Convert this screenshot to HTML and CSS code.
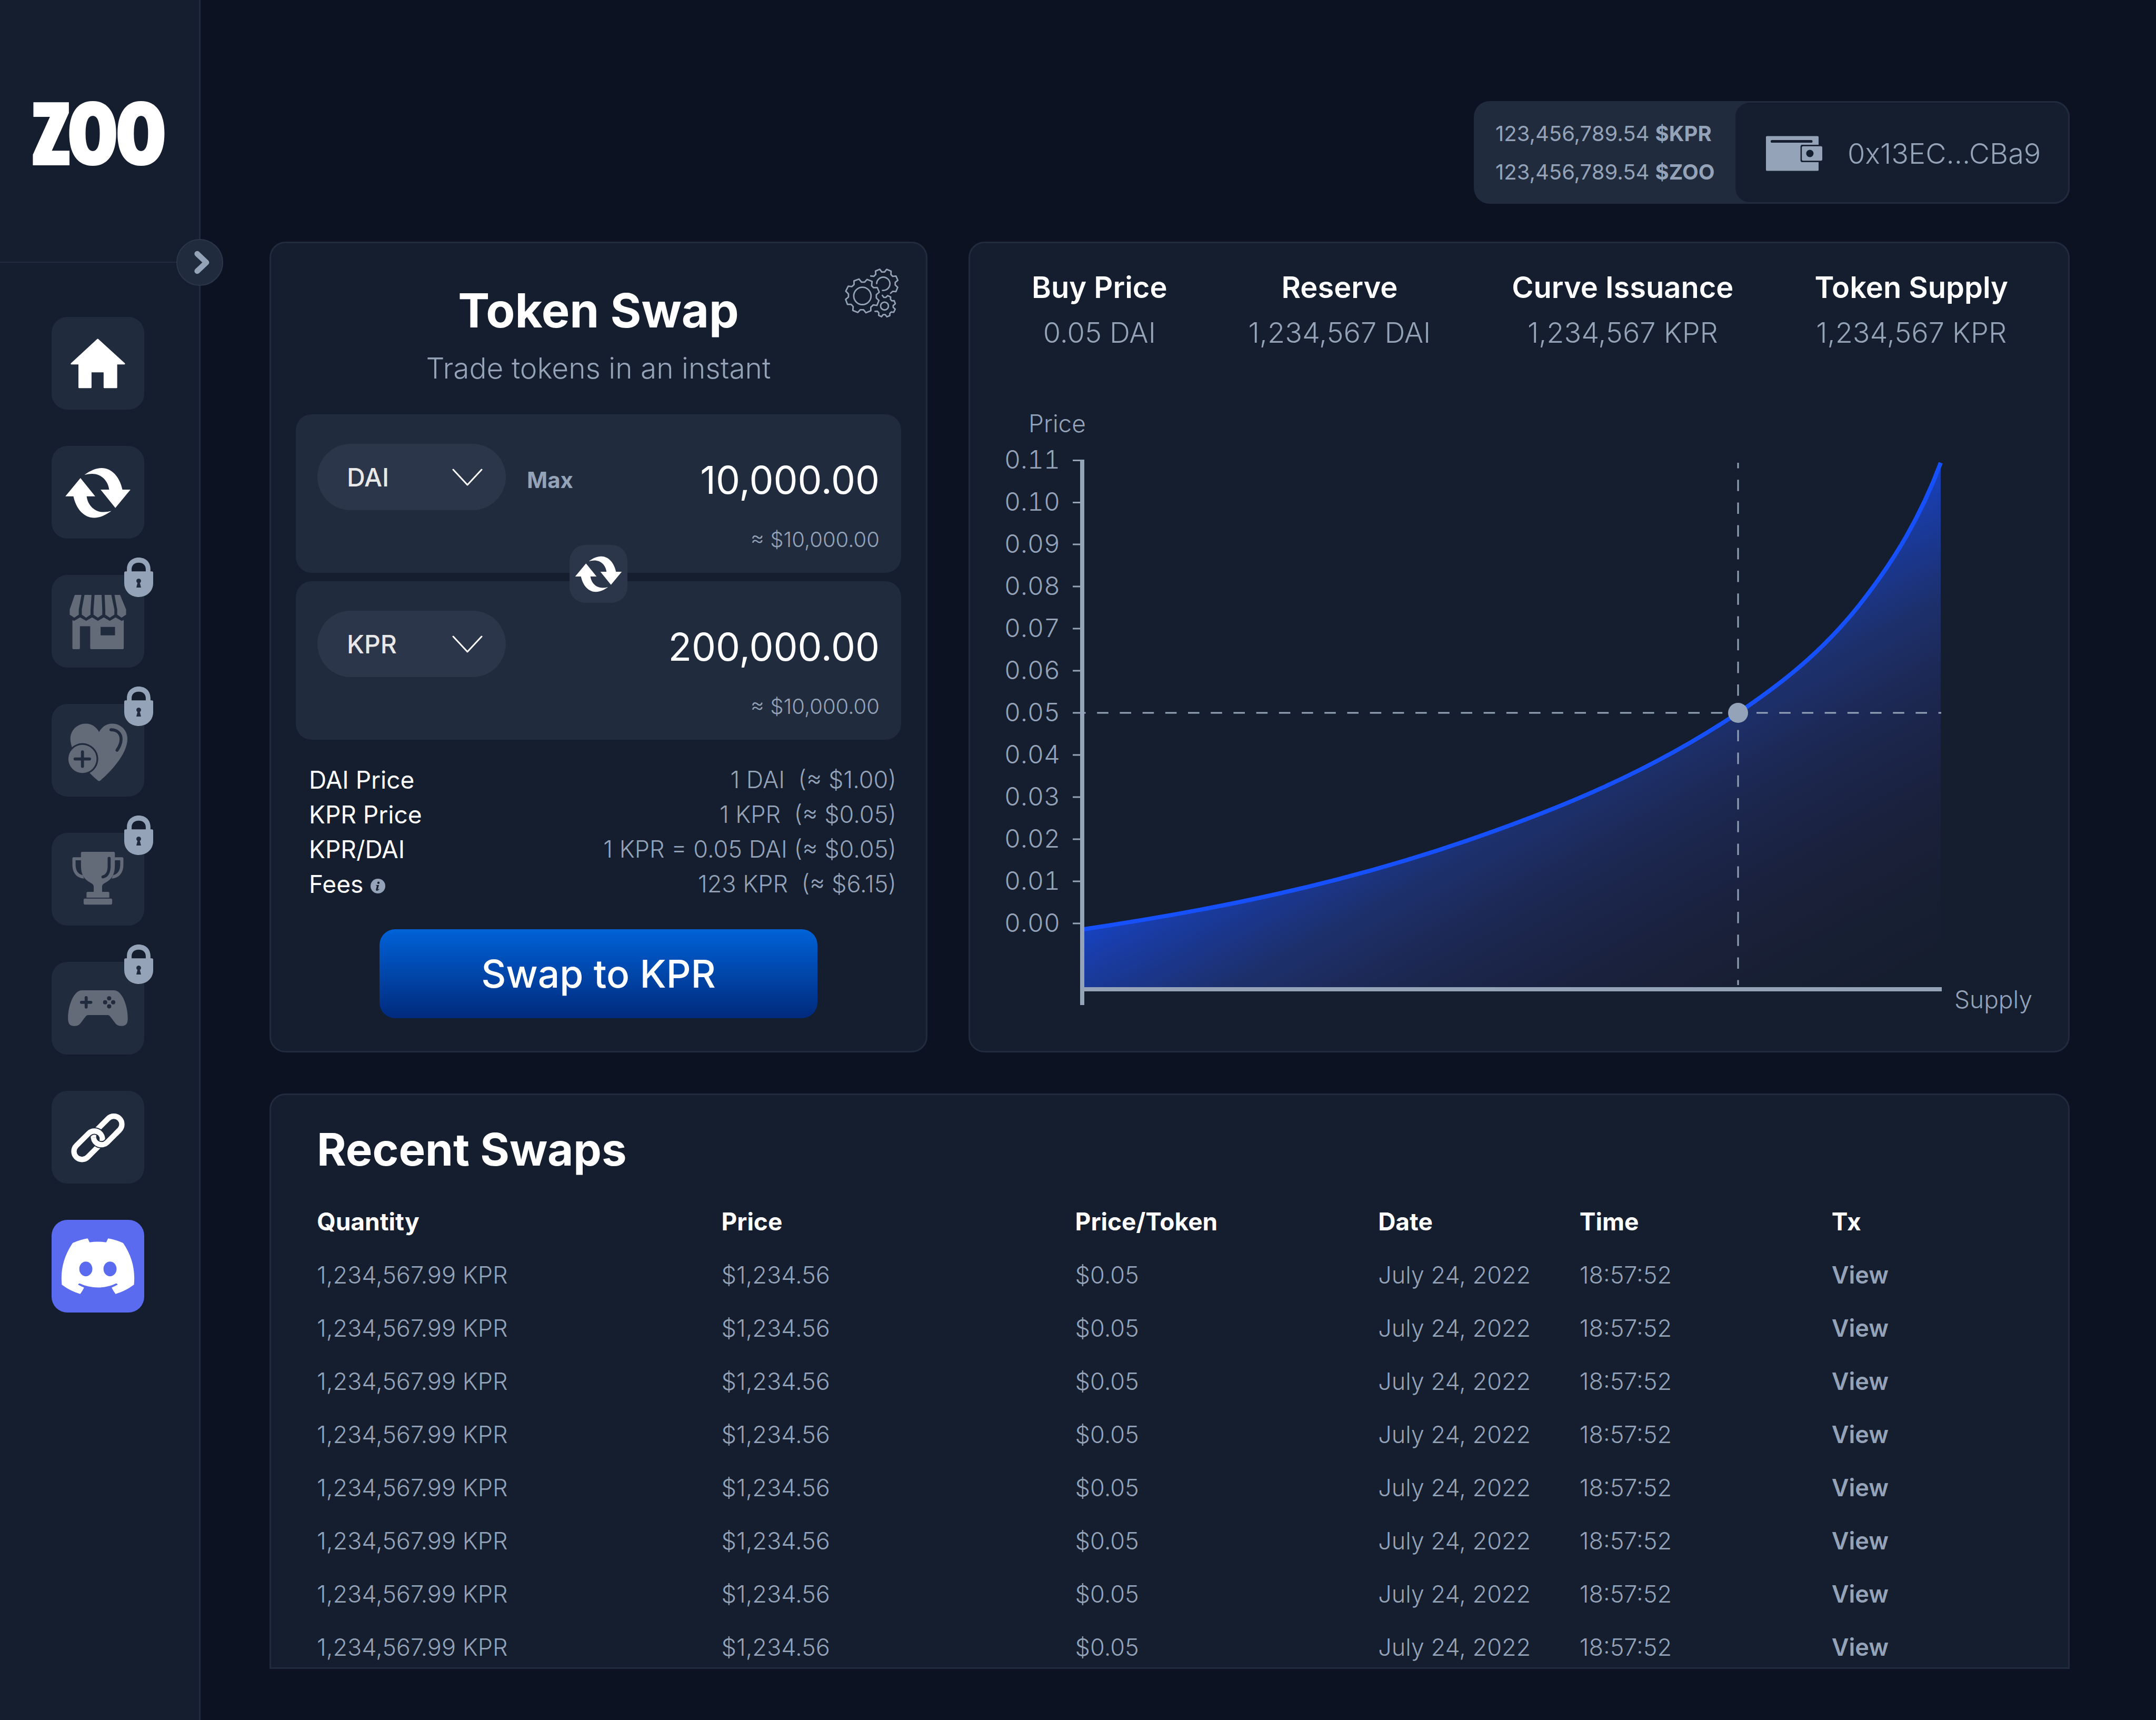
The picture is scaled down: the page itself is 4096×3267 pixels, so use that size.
FILE: index.html
```html
<!DOCTYPE html>
<html lang="en">
<head>
<meta charset="utf-8">
<title>Zoo – Token Swap</title>
<link rel="stylesheet" href="styles.css">
</head>
<body>
<svg class="defs" aria-hidden="true">
  <defs>
    <symbol id="icon-swap" viewBox="40 60 196 160">
      <path id="swap-half" d="M97.800 86.300C115 74 132 66 149 66C180 66 203 93 211 130H235L190 184.500L146 130H171.500C168 103 148 83 121 83Q109 83 97.800 86.300Z"/>
      <use href="#swap-half" transform="rotate(180 138 140)"/>
    </symbol>
    <symbol id="icon-lock" viewBox="0 0 86 117">
      <path fill-rule="evenodd" d="M8 41V34C8 14 22 0 43 0C64 0 78 14 78 34V41H82Q86 41 86 45V76C86 100 67 117 43 117C19 117 0 100 0 76V45Q0 41 4 41ZM22 41H64V35C64 22 55 15 43 15C31 15 22 22 22 35Z"/>
      <path class="cut" d="M39.500 75.500A7 7 0 1 1 46.500 75.500L50 89H36Z"/>
    </symbol>
  </defs>
</svg>

<div class="app">
  <aside class="sidebar">
    <a class="logo" href="#">ZOO</a>
    <button class="collapse" type="button" aria-label="Expand menu">
      <svg viewBox="0 0 88 88"><path d="M39 27L57 44L39 61"/></svg>
    </button>
    <nav class="nav">
      <a class="tile" href="#" aria-label="Home">
        <svg viewBox="0 0 276 276"><path class="round" d="M137.500 67L217 139.500H193.500V210H157V163H117V210H82V139.500H59Z"/></svg>
      </a>
      <a class="tile" href="#" aria-label="Swap">
        <svg viewBox="0 0 276 276"><use href="#icon-swap" x="40" y="60" width="196" height="160"/></svg>
      </a>
      <a class="tile locked" href="#" aria-label="Store">
        <svg viewBox="0 0 276 276">
          <path d="M69 59.500H89L81 103V118.500L67.500 127.500L54 118.500V103ZM98 59.500H119L116 103V118.500L103 127.500L90 118.500V103ZM128 59.500H149L151 103V118.500L138 127.500L125 118.500V103ZM158 59.500H178L187 103V118.500L173.500 127.500L160 118.500V103ZM187.500 59.500H204L222 103V118.500L208.500 127.500L195.500 118.500V103Z"/>
          <path fill-rule="evenodd" d="M62 134.500L67 137L85 126.500L103 137L120.500 126.500L138 137L155.500 126.500L173.500 137L190.500 126.500L208.500 137L215 134.500V217Q215 221 211 221H119Q115 221 115 217V153H84.500V217Q84.500 221 80.500 221H66Q62 221 62 217ZM146 155V180H189V155Z"/>
        </svg>
        <svg class="lock" viewBox="0 0 86 117"><use href="#icon-lock"/></svg>
      </a>
      <a class="tile locked" href="#" aria-label="Health">
        <svg viewBox="0 0 276 276">
          <path d="M141.500 83.500C132 68 119 59 102 59C76 59 56 79 56 104C56 150 110 205 138 228.500Q141.500 231 145 228.500C173 205 226 150 226 104C226 79 206 59 181 59C164 59 151 68 141.500 83.500Z"/>
          <circle class="cut" cx="92" cy="164" r="47"/><circle cx="92" cy="164" r="42"/>
          <path class="groove" d="M92 143V186M70 164H113M177 77C196 77 207 88 207 105C207 117 202 128 195 138"/>
        </svg>
        <svg class="lock" viewBox="0 0 86 117"><use href="#icon-lock"/></svg>
      </a>
      <a class="tile locked" href="#" aria-label="Rewards">
        <svg viewBox="0 0 276 276">
          <path d="M91 56.500H185Q188.500 56.500 188.500 60V95C188.500 118 184 133 166 145C156 151 150.500 153 150.500 160V175.500H125.500V160C125.500 153 120 151 110 145C92 133 87.500 118 87.500 95V60Q87.500 56.500 91 56.500Z"/>
          <path fill-rule="evenodd" d="M88 72.500H66Q62 72.500 62 77V95C62 118 74 135 97 136L93 126C78 122 71.500 112 71.500 95V81.500H88ZM188 72.500H210Q214 72.500 214 77V95C214 118 202 135 179 136L183 126C198 122 204.500 112 204.500 95V81.500H188Z"/>
          <path d="M108 175.500H168Q172 175.500 172 179V193H104V179Q104 175.500 108 175.500Z"/>
          <rect x="95.500" y="195.500" width="85" height="18" rx="4"/>
          <path class="groove" d="M171.500 76V100Q171 127 153 131"/>
        </svg>
        <svg class="lock" viewBox="0 0 86 117"><use href="#icon-lock"/></svg>
      </a>
      <a class="tile locked" href="#" aria-label="Games">
        <svg viewBox="0 0 276 276">
          <path d="M90 84.500H186C208 84.500 227 126 227 168C227 184 222 191 207 191Q196 191 190 183L174 162Q171 158.500 167 158.500H109Q105 158.500 102 162L86 183Q80 191 69 191C54 191 49 184 49 168C49 126 68 84.500 90 84.500Z"/>
          <path class="groove" d="M103 106.500V134.500M89 120.500H117"/>
          <g class="cut"><circle cx="171.500" cy="108.500" r="6.300"/><circle cx="171.500" cy="132.500" r="6.300"/><circle cx="159.500" cy="120.500" r="6.300"/><circle cx="183.500" cy="120.500" r="6.300"/></g>
        </svg>
        <svg class="lock" viewBox="0 0 86 117"><use href="#icon-lock"/></svg>
      </a>
      <a class="tile" href="#" aria-label="Links">
        <svg viewBox="0 0 276 276">
          <g class="chain">
            <rect x="-24" y="-50" width="48" height="100" rx="24" transform="translate(167 118) rotate(45)"/>
            <g transform="translate(109 162) rotate(45)">
              <path class="halo" d="M15 -44.700A24 24 0 0 0 -24 -26V10"/>
              <rect x="-24" y="-50" width="48" height="100" rx="24"/>
            </g>
            <g transform="translate(167 118) rotate(45)">
              <path class="halo" d="M-15 44.700A24 24 0 0 0 24 26V-10"/>
              <path d="M-15 44.700A24 24 0 0 0 24 26V-26"/>
            </g>
          </g>
        </svg>
      </a>
      <a class="tile discord" href="#" aria-label="Discord">
        <svg viewBox="0 0 276 276"><path transform="translate(29.500 29.500) scale(9.040)" d="M20.317 4.3698a19.7913 19.7913 0 00-4.8851-1.5152.0741.0741 0 00-.0785.0371c-.211.3753-.4447.8648-.6083 1.2495-1.8447-.2762-3.68-.2762-5.4868 0-.1636-.3933-.4058-.8742-.6177-1.2495a.077.077 0 00-.0785-.037 19.7363 19.7363 0 00-4.8852 1.515.0699.0699 0 00-.0321.0277C.5334 9.0458-.319 13.5799.0992 18.0578a.0824.0824 0 00.0312.0561c2.0528 1.5076 4.0413 2.4228 5.9929 3.0294a.0777.0777 0 00.0842-.0276c.4616-.6304.8731-1.2952 1.226-1.9942a.076.076 0 00-.0416-.1057c-.6528-.2476-1.2743-.5495-1.8722-.8923a.077.077 0 01-.0076-.1277c.1258-.0943.2517-.1923.3718-.2914a.0743.0743 0 01.0776-.0105c3.9278 1.7933 8.18 1.7933 12.0614 0a.0739.0739 0 01.0785.0095c.1202.099.246.1981.3728.2924a.077.077 0 01-.0066.1276 12.2986 12.2986 0 01-1.873.8914.0766.0766 0 00-.0407.1067c.3604.698.7719 1.3628 1.225 1.9932a.076.076 0 00.0842.0286c1.961-.6067 3.9495-1.5219 6.0023-3.0294a.077.077 0 00.0313-.0552c.5004-5.177-.8382-9.6739-3.5485-13.6604a.061.061 0 00-.0312-.0286zM8.02 15.3312c-1.1825 0-2.1569-1.0857-2.1569-2.419 0-1.3332.9555-2.4189 2.157-2.4189 1.2108 0 2.1757 1.0952 2.1568 2.419 0 1.3332-.9555 2.4189-2.1569 2.4189zm7.9748 0c-1.1825 0-2.1569-1.0857-2.1569-2.419 0-1.3332.9554-2.4189 2.1569-2.4189 1.2108 0 2.1757 1.0952 2.1568 2.419 0 1.3332-.946 2.4189-2.1568 2.4189z"/></svg>
      </a>
    </nav>
  </aside>

  <main class="main">
    <header class="topbar">
      <div class="wallet">
        <div class="balances">
          <div>123,456,789.54 <b>$KPR</b></div>
          <div>123,456,789.54 <b>$ZOO</b></div>
        </div>
        <button class="account" type="button">
          <svg viewBox="0 0 168 104" aria-hidden="true">
            <path fill-rule="evenodd" d="M3 0H154Q157 0 157 3V26H108Q103 26 103 32V72Q103 78 108 78H157V101Q157 104 154 104H3Q0 104 0 101V3Q0 0 3 0ZM18 12Q14 12 14 16Q14 20 18 20H135Q139 20 139 16Q139 12 135 12Z"/>
            <path fill-rule="evenodd" d="M111 30.500H164Q168 30.500 168 34V70Q168 73.500 164 73.500H111Q107 73.500 107 70V34Q107 30.500 111 30.500ZM131 41A11 11 0 1 0 131 63A11 11 0 1 0 131 41Z"/>
          </svg>
          <span>0x13EC...CBa9</span>
        </button>
      </div>
    </header>

    <div class="panels">
      <section class="card swap">
        <button class="settings" type="button" aria-label="Settings">
          <svg viewBox="172 167 487 444">
            <path d="M303 265L325 292H353L375 268L419 286L415 324L432 342L465 340L483 382L457 404V434L480 456L462 500L430 495L408 515V547L365 565L343 538H315L292 562L248 544L251 510L233 490H200L184 446L209 425V397L185 373L207 329L240 332L259 314L258 282Z"/>
            <circle cx="333" cy="415" r="77"/>
            <path d="M407 238L435 241L452 223L450 194L487 178L505 202H530L549 179L588 195L587 225L603 241L632 239L648 276L625 295V318L647 339L631 377L603 374L584 391"/>
            <path d="M460 305A59 59 0 1 1 512 366"/>
            <path d="M510 410L524 428H542L558 412L584 424L583 445L595 459L616 458L626 485L607 501V517L625 533L612 560L590 558L577 571V590L551 601L537 582H517L503 600L478 588L479 565L467 551L445 552"/>
            <circle cx="530" cy="505" r="35"/>
          </svg>
        </button>
        <h1>Token Swap</h1>
        <p class="subtitle">Trade tokens in an instant</p>

        <form class="swap-form">
          <div class="legs">
            <div class="leg">
              <div class="leg-row">
                <div class="picker">
                  <select aria-label="Token to sell"><option>DAI</option><option>KPR</option></select>
                  <svg viewBox="0 0 58 34" aria-hidden="true"><path d="M2 2L29 31L56 2"/></svg>
                </div>
                <button class="max" type="button">Max</button>
                <input class="amount" type="text" value="10,000.00" aria-label="Amount to sell">
              </div>
              <div class="fiat">≈ $10,000.00</div>
            </div>
            <div class="leg">
              <div class="leg-row">
                <div class="picker">
                  <select aria-label="Token to buy"><option>KPR</option><option>DAI</option></select>
                  <svg viewBox="0 0 58 34" aria-hidden="true"><path d="M2 2L29 31L56 2"/></svg>
                </div>
                <input class="amount" type="text" value="200,000.00" aria-label="Amount to buy">
              </div>
              <div class="fiat">≈ $10,000.00</div>
            </div>
            <button class="flip" type="button" aria-label="Switch tokens">
              <svg viewBox="40 60 196 160"><use href="#icon-swap" x="40" y="60" width="196" height="160"/></svg>
            </button>
          </div>
          <dl class="rates">
            <div><dt>DAI Price</dt><dd>1 DAI&nbsp; (≈ $1.00)</dd></div>
            <div><dt>KPR Price</dt><dd>1 KPR&nbsp; (≈ $0.05)</dd></div>
            <div><dt>KPR/DAI</dt><dd>1 KPR = 0.05 DAI (≈ $0.05)</dd></div>
            <div>
              <dt>Fees
                <svg class="info" viewBox="0 0 28 28" aria-hidden="true"><circle cx="14" cy="14" r="14"/><path d="M15 5.500A2.200 2.200 0 1 1 15 9.900A2.200 2.200 0 1 1 15 5.500ZM10.500 12H16L13.800 20Q13.700 21 14.800 20.300L16 19.300L16.700 20Q14.500 23 12 23Q9.700 22.800 10.300 20.300L12 13.500L10.300 13Z"/></svg>
              </dt>
              <dd>123 KPR&nbsp; (≈ $6.15)</dd>
            </div>
          </dl>
          <button class="submit" type="button">Swap to KPR</button>
        </form>
      </section>

      <section class="card curve">
        <dl class="stats">
          <div><dt>Buy Price</dt><dd>0.05 DAI</dd></div>
          <div><dt>Reserve</dt><dd>1,234,567 DAI</dd></div>
          <div><dt>Curve Issuance</dt><dd>1,234,567 KPR</dd></div>
          <div><dt>Token Supply</dt><dd>1,234,567 KPR</dd></div>
        </dl>
        <svg class="chart" viewBox="1873 780 2026 1150" role="img" aria-label="Price by supply">
          <defs>
            <linearGradient id="area" gradientUnits="userSpaceOnUse" x1="2060" y1="1765" x2="2456" y2="2495">
              <stop offset="0" stop-color="#1742c0"/>
              <stop offset=".08" stop-color="#193ba2"/>
              <stop offset=".27" stop-color="#1d306c"/>
              <stop offset=".45" stop-color="#1c2750"/>
              <stop offset=".7" stop-color="#192039"/>
              <stop offset="1" stop-color="#151e2e"/>
            </linearGradient>
          </defs>
          <path fill="url(#area)" d="M2059 1765C2302 1729 2546 1680 2789 1596C2960 1537 3131 1468 3302 1354C3382 1300 3458 1242 3531 1151C3583 1085 3642 1000 3687 879V1875H2059Z"/>
          <path class="line" d="M2059 1765C2302 1729 2546 1680 2789 1596C2960 1537 3131 1468 3302 1354C3382 1300 3458 1242 3531 1151C3583 1085 3642 1000 3687 879"/>
          <path class="guide" stroke-dasharray="21.600 21.600" stroke-dashoffset="11" d="M3302 879V1871M2052 1354H3688"/>
          <path class="axis" d="M2056 873V1909M2056 1879H3689"/>
          <path class="ticks" d="M2038 874.500h18M2038 954.500h18M2038 1034h18M2038 1114h18M2038 1194h18M2038 1274h18M2038 1354h18M2038 1434h18M2038 1514h18M2038 1594h18M2038 1674h18M2038 1754h18"/>
          <circle class="point" cx="3302" cy="1354" r="19"/>
          <text x="1954" y="821">Price</text>
          <g class="scale">
            <text x="2014" y="890">0.11</text>
            <text x="2014" y="970">0.10</text>
            <text x="2014" y="1050">0.09</text>
            <text x="2014" y="1130">0.08</text>
            <text x="2014" y="1210">0.07</text>
            <text x="2014" y="1290">0.06</text>
            <text x="2014" y="1370">0.05</text>
            <text x="2014" y="1450">0.04</text>
            <text x="2014" y="1530">0.03</text>
            <text x="2014" y="1610">0.02</text>
            <text x="2014" y="1690">0.01</text>
            <text x="2014" y="1770">0.00</text>
          </g>
          <text x="3713" y="1915">Supply</text>
        </svg>
      </section>
    </div>

    <section class="card recent">
      <h2>Recent Swaps</h2>
      <table>
        <colgroup><col class="c-quantity"><col class="c-price"><col class="c-rate"><col class="c-date"><col class="c-time"><col></colgroup>
        <thead>
          <tr><th>Quantity</th><th>Price</th><th>Price/Token</th><th>Date</th><th>Time</th><th>Tx</th></tr>
        </thead>
        <tbody>
          <tr><td>1,234,567.99 KPR</td><td>$1,234.56</td><td>$0.05</td><td>July 24, 2022</td><td>18:57:52</td><td><a href="#">View</a></td></tr>
          <tr><td>1,234,567.99 KPR</td><td>$1,234.56</td><td>$0.05</td><td>July 24, 2022</td><td>18:57:52</td><td><a href="#">View</a></td></tr>
          <tr><td>1,234,567.99 KPR</td><td>$1,234.56</td><td>$0.05</td><td>July 24, 2022</td><td>18:57:52</td><td><a href="#">View</a></td></tr>
          <tr><td>1,234,567.99 KPR</td><td>$1,234.56</td><td>$0.05</td><td>July 24, 2022</td><td>18:57:52</td><td><a href="#">View</a></td></tr>
          <tr><td>1,234,567.99 KPR</td><td>$1,234.56</td><td>$0.05</td><td>July 24, 2022</td><td>18:57:52</td><td><a href="#">View</a></td></tr>
          <tr><td>1,234,567.99 KPR</td><td>$1,234.56</td><td>$0.05</td><td>July 24, 2022</td><td>18:57:52</td><td><a href="#">View</a></td></tr>
          <tr><td>1,234,567.99 KPR</td><td>$1,234.56</td><td>$0.05</td><td>July 24, 2022</td><td>18:57:52</td><td><a href="#">View</a></td></tr>
          <tr><td>1,234,567.99 KPR</td><td>$1,234.56</td><td>$0.05</td><td>July 24, 2022</td><td>18:57:52</td><td><a href="#">View</a></td></tr>
        </tbody>
      </table>
    </section>
  </main>
</div>
</body>
</html>
```
FILE: styles.css
```css
:root {
  --page: #0c1221;
  --card: #151e2f;
  --raised: #202b3e;
  --pill: #2c364a;
  --muted: #94a3b8;
  --disabled: #636a78;
}

*, *::before, *::after { box-sizing: border-box; }

body {
  margin: 0;
  background: var(--page);
  color: #fff;
  font-family: Inter, "Liberation Sans", sans-serif;
}

h1, h2, p, dl, dd { margin: 0; }
a { color: inherit; text-decoration: none; }
svg { display: block; }
button, input, select {
  font: inherit;
  color: inherit;
  background: none;
  border: 0;
  margin: 0;
  padding: 0;
}
.defs { position: absolute; width: 0; height: 0; }

.app { display: flex; height: 100vh; }

/* Sidebar */
.sidebar {
  position: relative;
  flex: 0 0 381px;
  background: var(--card);
  border-right: 3px solid var(--raised);
}
.logo {
  display: flex;
  align-items: center;
  justify-content: center;
  height: 499px;
  border-bottom: 2px solid var(--raised);
  font: 800 154px/200px "Open Sans Condensed", "Roboto Condensed", sans-serif;
  -webkit-text-stroke: 10px #fff;
}
.collapse {
  position: absolute;
  top: 454px;
  right: -46px;
  width: 89px;
  height: 89px;
  border: 2px solid var(--pill);
  border-radius: 50%;
  background: var(--raised);
}
.collapse path {
  fill: none;
  stroke: var(--muted);
  stroke-width: 11;
  stroke-linecap: round;
  stroke-linejoin: round;
}
.nav {
  display: flex;
  flex-direction: column;
  gap: 69px;
  padding: 103px 0 0 98px;
}
.tile {
  position: relative;
  width: 176px;
  height: 176px;
  border-radius: 30px;
  background: var(--raised);
  fill: #fff;
}
.tile .round { stroke: #fff; stroke-width: 4; stroke-linejoin: round; }
.locked { fill: var(--disabled); }
.cut { fill: var(--raised); }
.groove {
  fill: none;
  stroke: var(--raised);
  stroke-width: 9;
  stroke-linecap: round;
}
.chain { fill: none; stroke: #fff; stroke-width: 16; }
.chain .halo { stroke: var(--raised); stroke-width: 22; }
.discord { background: #5a6bef; }
.lock {
  position: absolute;
  top: -33px;
  left: 138px;
  width: 55px;
  height: 75px;
  fill: var(--muted);
}

/* Main column */
.main {
  flex: 1;
  min-width: 0;
  display: flex;
  flex-direction: column;
  padding: 192px 164px 97px 131px;
}
.topbar { display: flex; justify-content: flex-end; margin-bottom: 72px; }
.wallet {
  display: flex;
  width: 1132px;
  height: 195px;
  border-radius: 30px;
  background: var(--raised);
}
.balances {
  flex: 1;
  display: flex;
  flex-direction: column;
  justify-content: center;
  padding-left: 41px;
  font-size: 40px;
  line-height: 73px;
  white-space: nowrap;
  color: var(--muted);
}
.account {
  display: flex;
  align-items: center;
  gap: 48px;
  width: 638px;
  padding: 4px 0 0 58px;
  border: 3px solid var(--raised);
  border-radius: 30px;
  background: var(--card);
  color: var(--muted);
  fill: var(--muted);
  font-size: 54px;
  font-weight: 300;
}
.account svg { width: 107px; height: 67px; }

.card {
  border: 3px solid var(--raised);
  border-radius: 30px;
  background: var(--card);
}
.panels {
  display: grid;
  grid-template-columns: minmax(0, 1250fr) minmax(0, 2092fr);
  gap: 78px;
  margin-bottom: 78px;
}

/* Swap form */
.swap { position: relative; padding: 78px 47px 62px; text-align: center; }
.settings { position: absolute; top: 47px; right: 51px; }
.settings svg {
  width: 104px;
  height: 95px;
  fill: none;
  stroke: var(--muted);
  stroke-width: 13;
  stroke-linecap: round;
  stroke-linejoin: round;
}
h1 { font-size: 90px; line-height: 100px; font-weight: 700; }
.subtitle {
  margin: 27px 0 56px;
  font-size: 55px;
  line-height: 64px;
  font-weight: 300;
  color: var(--muted);
}
.legs {
  position: relative;
  display: grid;
  grid-template-columns: minmax(0, 1fr);
  gap: 16px;
}
.leg {
  height: 301px;
  padding: 56px 41px 0;
  border-radius: 30px;
  background: var(--raised);
}
.leg-row { display: flex; align-items: center; gap: 40px; height: 126px; }
.picker { position: relative; flex: none; }
.picker select {
  appearance: none;
  width: 358px;
  height: 126px;
  padding: 0 56px;
  border-radius: 63px;
  background: var(--pill);
  color: #e8e8e8;
  font-size: 48px;
  font-weight: 500;
}
.picker svg {
  position: absolute;
  top: 47px;
  right: 44px;
  width: 58px;
  height: 34px;
  fill: none;
  stroke: #fff;
  stroke-width: 3;
  stroke-linecap: round;
  stroke-linejoin: round;
  pointer-events: none;
}
.max { padding-top: 10px; font-size: 42px; font-weight: 700; color: var(--muted); }
.amount {
  flex: 1;
  min-width: 0;
  padding-top: 10px;
  font-size: 73px;
  text-align: right;
}
.fiat {
  margin-top: 31px;
  font-size: 40px;
  line-height: 50px;
  font-weight: 300;
  color: var(--muted);
  text-align: right;
}
.flip {
  position: absolute;
  top: 248px;
  left: 50%;
  width: 110px;
  height: 110px;
  margin-left: -55px;
  border-radius: 30px;
  background: var(--pill);
  fill: #fff;
}
.flip svg { width: 90px; height: 73px; margin: 0 auto; }
.rates {
  margin: 43px 9px 53px 25px;
  font-size: 46px;
  line-height: 66px;
}
.rates > div { display: flex; justify-content: space-between; }
.rates dt { display: flex; align-items: center; gap: 14px; }
.rates dd { font-size: 45px; font-weight: 300; color: var(--muted); }
.info { width: 28px; height: 28px; margin-top: 8px; fill: var(--muted); }
.info path { fill: var(--card); }
.submit {
  width: 832px;
  height: 169px;
  border-radius: 30px;
  background: linear-gradient(#0062d8, #002a7c);
  font-size: 73px;
  font-weight: 500;
}

/* Bonding curve */
.curve { padding: 42px 30px 0; }
.stats {
  display: flex;
  justify-content: space-between;
  margin: 0 84px 106px 87px;
  line-height: 85px;
  text-align: center;
  white-space: nowrap;
}
.stats dt { font-size: 56px; font-weight: 600; }
.stats dd { font-size: 54px; font-weight: 300; color: var(--muted); }
.chart { width: 100%; overflow: visible; }
.chart text { fill: var(--muted); font-size: 46px; font-weight: 300; }
.chart .scale text { text-anchor: end; font-size: 48px; font-variant-numeric: tabular-nums; }
.line { fill: none; stroke: #1650fa; stroke-width: 8; }
.guide { fill: none; stroke: var(--muted); stroke-width: 3; }
.axis { fill: none; stroke: var(--muted); stroke-width: 8; }
.ticks { fill: none; stroke: var(--muted); stroke-width: 3; }
.point { fill: var(--muted); }

/* Recent swaps */
.recent {
  flex: 1;
  min-height: 0;
  overflow: hidden;
  padding: 54px 0 0 87px;
  border-radius: 30px 30px 0 0;
}
h2 { margin-bottom: 34px; font-size: 85px; line-height: 100px; font-weight: 700; }
table {
  width: 100%;
  table-layout: fixed;
  border-collapse: collapse;
  text-align: left;
  font-size: 45px;
  font-weight: 300;
  color: var(--muted);
}
th, td { height: 101px; padding: 0; }
th { height: 103px; font-size: 46px; font-weight: 700; color: #fff; }
td a { font-weight: 600; }
.c-quantity { width: 23.1%; }
.c-price { width: 20.2%; }
.c-rate { width: 17.3%; }
.c-date { width: 11.5%; }
.c-time { width: 14.4%; }
```
